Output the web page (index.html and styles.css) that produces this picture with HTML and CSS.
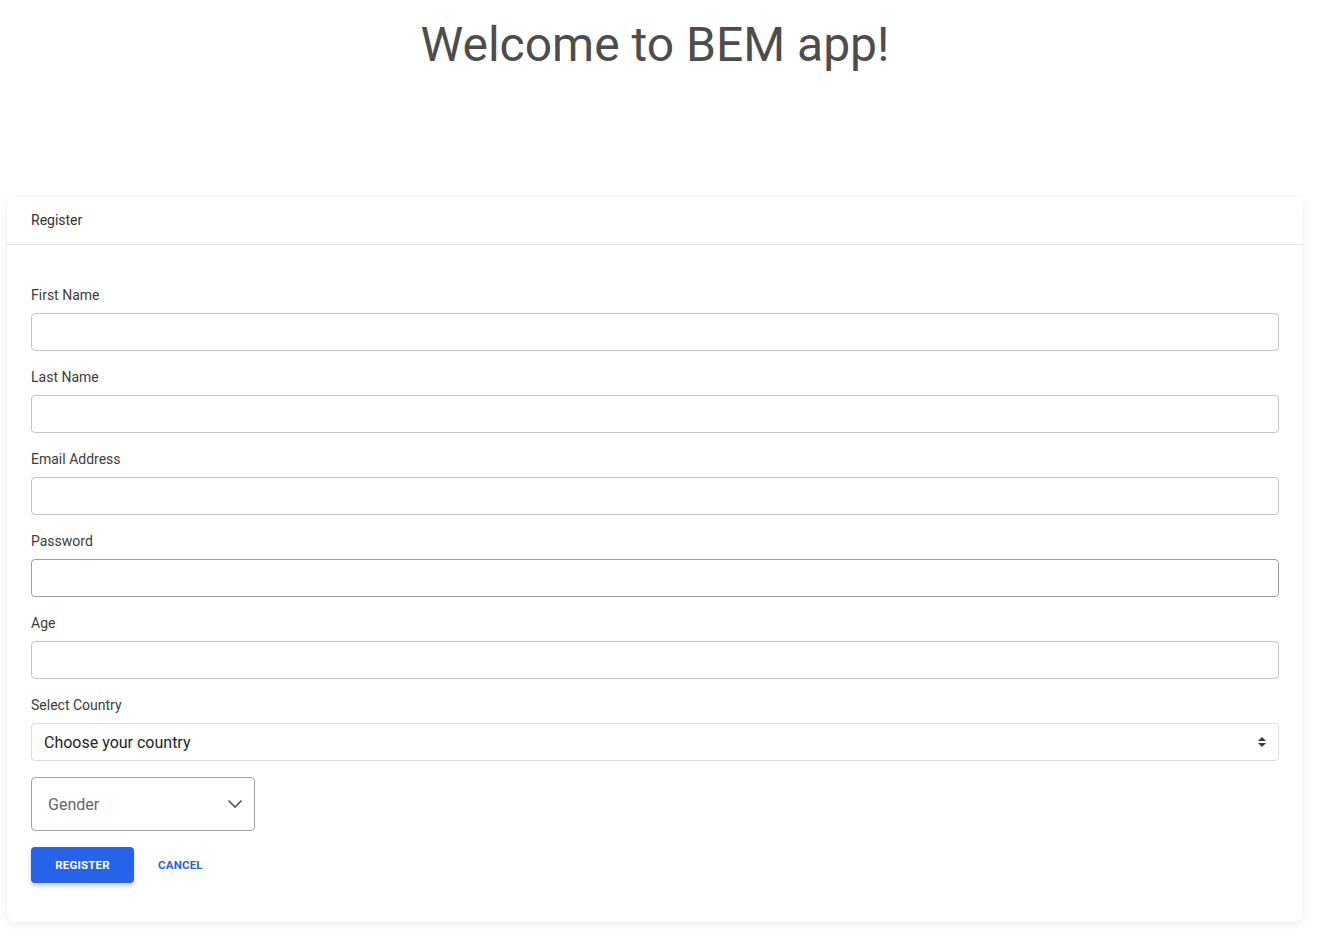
FILE: index.html
```html
<!DOCTYPE html>
<html lang="en">
<head>
<meta charset="utf-8">
<title>BEM app</title>
<link rel="stylesheet" href="styles.css">
</head>
<body>
<div class="page">
  <h1 class="page__title">Welcome to BEM app!</h1>
  <div class="card">
    <div class="card__header">Register</div>
    <form class="card__body form">
      <div class="form__field">
        <label class="form__label">First Name</label>
        <input class="form__input" type="text">
      </div>
      <div class="form__field">
        <label class="form__label">Last Name</label>
        <input class="form__input" type="text">
      </div>
      <div class="form__field">
        <label class="form__label">Email Address</label>
        <input class="form__input" type="text">
      </div>
      <div class="form__field">
        <label class="form__label">Password</label>
        <input class="form__input form__input--dark" type="password">
      </div>
      <div class="form__field">
        <label class="form__label">Age</label>
        <input class="form__input" type="text">
      </div>
      <div class="form__field">
        <label class="form__label">Select Country</label>
        <div class="form__select">
          <span class="form__select-text">Choose your country</span>
          <svg class="form__select-icon" width="8" height="10" viewBox="0 0 4 5"><path d="M2 0L0 2h4zm0 5L0 3h4z" fill="#343a40"/></svg>
        </div>
      </div>
      <div class="form__gender">
        <span class="form__gender-text">Gender</span>
        <svg class="form__gender-icon" width="16" height="10" viewBox="0 0 16 10"><path d="M1.5 1.5L8 8L14.5 1.5" fill="none" stroke="#555" stroke-width="1.6"/></svg>
      </div>
      <div class="form__actions">
        <button class="button button--primary" type="button">Register</button>
        <button class="button button--text" type="button">Cancel</button>
      </div>
    </form>
  </div>
</div>
</body>
</html>
```

FILE: styles.css
```css
* { box-sizing: border-box; }
html, body { margin: 0; padding: 0; background: #fff; }
body { font-family: Roboto, "Liberation Sans", Arial, sans-serif; }

.page {
  padding: 0 14px 0 7px;
}

.page__title {
  margin: 15px 0 0;
  text-align: center;
  font-size: 48px;
  line-height: 60px;
  font-weight: 400;
  color: #4d4d4d;
}

.card {
  margin-top: 122px;
  background: #fff;
  border-radius: 8px;
  box-shadow: 0 2px 10px rgba(0, 0, 0, 0.08), 0 0 2px rgba(0, 0, 0, 0.03);
  margin-bottom: 24px;
}

.card__header {
  padding: 15px 24px;
  font-size: 14px;
  line-height: 17px;
  color: #333;
  border-bottom: 1px solid #e3e3e3;
}

.card__body {
  padding: 39px 24px 39px;
}

.form {
  display: flex;
  flex-direction: column;
  margin: 0;
}

.form__field {
  display: flex;
  flex-direction: column;
  margin-bottom: 15px;
}

.form__label {
  font-size: 14px;
  line-height: 21px;
  color: #3d3d3d;
  padding-top: 1px;
  margin-bottom: 7px;
}

.form__input {
  height: 38px;
  border: 1px solid #c4c4c4;
  border-radius: 4px;
  background: #fff;
  outline: none;
  padding: 0 12px;
  font-size: 16px;
}

.form__input--dark { border-color: #9e9e9e; }

.form__select {
  height: 38px;
  border: 1px solid #d9dce0;
  border-radius: 4px;
  display: flex;
  align-items: center;
  justify-content: space-between;
  padding: 0 12px;
}

.form__select-text {
  font-size: 16px;
  color: #212529;
}

.form__gender {
  margin-top: 1px;
  width: 224px;
  height: 54px;
  border: 1px solid #a3a3a3;
  border-radius: 4px;
  display: flex;
  align-items: center;
  justify-content: space-between;
  padding: 0 11px 0 16px;
}

.form__gender-text {
  font-size: 16px;
  color: #666;
}

.form__actions {
  display: flex;
  align-items: center;
  gap: 8px;
  margin-top: 16px;
}

.button {
  font-family: Roboto, "Liberation Sans", Arial, sans-serif;
  font-size: 11.5px;
  font-weight: 700;
  text-transform: uppercase;
  letter-spacing: 0.2px;
  border: none;
  border-radius: 4px;
  height: 36px;
  cursor: pointer;
}

.button--primary {
  width: 103px;
  background: #2563eb;
  color: #fff;
  box-shadow: 0 3px 5px rgba(0, 0, 0, 0.2);
}

.button--text {
  background: transparent;
  color: #2563eb;
  padding: 0 16px;
}
```
